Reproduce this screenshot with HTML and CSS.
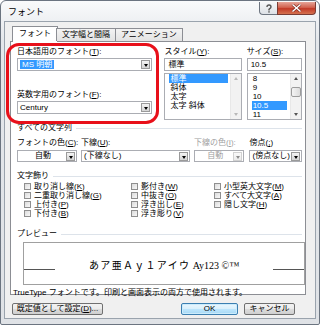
FILE: index.html
```html
<!DOCTYPE html>
<html lang="ja">
<head>
<meta charset="utf-8">
<link rel="stylesheet" href="styles.css">
</head>
<body>
<div class="window">
  <div class="titlebar">
    <span class="title">フォント</span>
    <div class="caption">
      <span class="cbtn help">
        <svg width="8" height="9" viewBox="0 0 8 9"><path d="M2 3 Q2 1 4 1 Q6 1 6 3 Q6 4 4.5 4.8 L4 5.5 L4 6.5" fill="none" stroke="#555" stroke-width="1.4"/><rect x="3.3" y="7.2" width="1.4" height="1.4" fill="#555"/></svg>
      </span>
      <span class="cbtn close">
        <svg width="11" height="8" viewBox="0 0 11 8"><path d="M1.5 0.5 L9.5 7.5 M9.5 0.5 L1.5 7.5" stroke="#7a2a22" stroke-width="2.6"/><path d="M1.5 0.5 L9.5 7.5 M9.5 0.5 L1.5 7.5" stroke="#fff" stroke-width="1.4"/></svg>
      </span>
    </div>
  </div>
  <div class="client">
    <div class="tabs">
      <span class="tab active">フォント</span>
      <span class="tab">文字幅と間隔</span>
      <span class="tab">アニメーション</span>
    </div>
    <div class="panel">
      <div class="top-row">
        <div class="col font-col">
          <div class="lbl">日本語用のフォント(<u>T</u>):</div>
          <div class="combo"><span class="ctext"><span class="sel">MS 明朝</span></span><span class="dd"></span></div>
          <div class="lbl lbl2">英数字用のフォント(<u>F</u>):</div>
          <div class="combo"><span class="ctext">Century</span><span class="dd"></span></div>
        </div>
        <div class="col style-col">
          <div class="lbl">スタイル(<u>Y</u>):</div>
          <div class="edit">標準</div>
          <div class="list">
            <div class="items">
              <div class="item on">標準</div>
              <div class="item">斜体</div>
              <div class="item">太字</div>
              <div class="item">太字 斜体</div>
            </div>
            <div class="sbar"><span class="arr up dis"></span><span class="track"></span><span class="arr down dis"></span></div>
          </div>
        </div>
        <div class="col size-col">
          <div class="lbl">サイズ(<u>S</u>):</div>
          <div class="edit">10.5</div>
          <div class="list">
            <div class="items">
              <div class="item">8</div>
              <div class="item">9</div>
              <div class="item">10</div>
              <div class="item on">10.5</div>
              <div class="item">11</div>
            </div>
            <div class="sbar"><span class="arr up"></span><span class="track"><span class="thumb"></span></span><span class="arr down"></span></div>
          </div>
        </div>
      </div>

      <div class="group-h"><span>すべての文字列</span><i></i></div>
      <div class="color-row">
        <div class="cc c1">
          <div class="lbl">フォントの色(<u>C</u>):</div>
          <div class="combo center"><span class="ctext">自動</span><span class="dd"></span></div>
        </div>
        <div class="cc c2">
          <div class="lbl">下線(<u>U</u>):</div>
          <div class="combo"><span class="ctext">(下線なし)</span><span class="dd"></span></div>
        </div>
        <div class="cc c3">
          <div class="lbl dim">下線の色(<u>I</u>):</div>
          <div class="combo center disabled"><span class="ctext">自動</span><span class="dd"></span></div>
        </div>
        <div class="cc c4">
          <div class="lbl">傍点(<u>;</u>)</div>
          <div class="combo"><span class="ctext">(傍点なし)</span><span class="dd"></span></div>
        </div>
      </div>

      <div class="group-h g2"><span>文字飾り</span><i></i></div>
      <div class="checks">
        <label class="chk"><span class="box"></span>取り消し線(<u>K</u>)</label>
        <label class="chk"><span class="box"></span>影付き(<u>W</u>)</label>
        <label class="chk"><span class="box"></span>小型英大文字(<u>M</u>)</label>
        <label class="chk"><span class="box"></span>二重取り消し線(<u>G</u>)</label>
        <label class="chk"><span class="box"></span>中抜き(<u>O</u>)</label>
        <label class="chk"><span class="box"></span>すべて大文字(<u>A</u>)</label>
        <label class="chk"><span class="box"></span>上付き(<u>P</u>)</label>
        <label class="chk"><span class="box"></span>浮き出し(<u>E</u>)</label>
        <label class="chk"><span class="box"></span>隠し文字(<u>H</u>)</label>
        <label class="chk"><span class="box"></span>下付き(<u>B</u>)</label>
        <label class="chk"><span class="box"></span>浮き彫り(<u>V</u>)</label>
      </div>

      <div class="group-h g3"><span>プレビュー</span><i></i></div>
      <div class="preview">
        <i class="pline"></i>
        <span class="ptext"><span class="pj">あア亜Ａｙ１アイウ</span> Ay123 ©™</span>
        <i class="pline"></i>
      </div>
      <div class="desc">TrueType フォントです。印刷と画面表示の両方で使用されます。</div>
    </div>
    <div class="buttons">
      <span class="btn def">既定値として設定(<u>D</u>)...</span>
      <span class="spacer"></span>
      <span class="btn ok">OK</span>
      <span class="btn cancel">キャンセル</span>
    </div>
  </div>
  <div class="highlight"></div>
</div>
</body>
</html>
```

FILE: styles.css
```css
* { box-sizing: border-box; }
html, body { margin: 0; padding: 0; background: #fff; }
body {
  font-family: "Liberation Sans", "Noto Sans CJK JP", sans-serif;
  font-size: 8px;
  line-height: 10px;
  color: #000;
}
u { text-decoration: underline; text-underline-offset: 1px; }

.window {
  position: relative;
  width: 320px;
  height: 325px;
  border: 1px solid #6b7480;
  border-radius: 6px 6px 2px 2px;
  background: linear-gradient(#f9fafb, #e4e7eb 40px, #dfe2e6);
  padding: 0 3px 5px 3px;
  display: flex;
  flex-direction: column;
}

.titlebar {
  height: 20px;
  display: flex;
  align-items: flex-start;
  justify-content: space-between;
  flex: none;
}
.title { font-size: 9px; margin: 6px 0 0 4px; line-height: 11px; color: #000; }
.caption { display: flex; margin-top: 1px; margin-right: 0px; }
.cbtn {
  height: 13px;
  display: flex; align-items: center; justify-content: center;
  border: 1px solid #6d7580;
  border-top: none;
}
.help {
  width: 18px;
  border-radius: 0 0 0 4px;
  border-right: none;
  background: linear-gradient(#f6f7f9, #dde1e6);
}
.close {
  width: 39px;
  border-radius: 0 0 4px 0;
  border-color: #7a3b33;
  background: linear-gradient(#e6a598, #d2624f 45%, #c23a27 55%, #d4714f);
}

.client {
  flex: 1;
  background: #f0f0f0;
  border: 1px solid #9aa3ad;
  padding: 4px 5px 0 5px;
  display: flex;
  flex-direction: column;
}

.tabs { display: flex; height: 15px; align-items: flex-end; padding-left: 2px; position: relative; z-index: 1; }
.tab {
  height: 13px;
  border: 1px solid #8c8e94;
  border-bottom: none;
  padding: 0 5px;
  margin-left: -1px;
  background: linear-gradient(#f3f3f3, #e3e3e3);
  line-height: 12px;
}
.tab.active {
  height: 16px;
  background: #fff;
  margin-bottom: -1px;
  padding: 1px 6px 0;
  margin-right: -1px;
  margin-left: 0;
}

.panel {
  background: #fff;
  border: 1px solid #8c8e94;
  margin-right: 4px;
  padding: 5px 3px 0 6px;
  height: 254px;
}

.top-row { display: flex; }
.col { display: flex; flex-direction: column; }
.font-col { width: 137px; margin-right: 12px; }
.style-col { width: 78px; margin-right: 5px; }
.size-col { width: 56px; }
.lbl { height: 10px; white-space: nowrap; }
.lbl.dim { color: #a0a0a0; }
.lbl2 { margin-top: 19px; }

.combo {
  height: 13px;
  border: 1px solid #abadb3;
  background: #fff;
  display: flex;
  align-items: center;
  margin-top: 1px;
  padding: 0 1px 0 1px;
}
.ctext { flex: 1; white-space: nowrap; overflow: hidden; padding-left: 1px; line-height: 10px; }
.combo.center .ctext { text-align: center; }
.combo.disabled { color: #a0a0a0; }
.combo.disabled .dd { opacity: .45; }
.sel { background: #3399ff; color: #fff; padding: 0 2px; }
.dd {
  width: 9px; height: 9px;
  border: 1px solid #9a9a9a;
  background: linear-gradient(#f4f4f4, #d4d4d4);
  position: relative;
  flex: none;
}
.dd::after {
  content: "";
  position: absolute;
  left: 2px; top: 3px;
  border-left: 2.5px solid transparent;
  border-right: 2.5px solid transparent;
  border-top: 3px solid #000;
}

.edit {
  height: 13px;
  border: 1px solid #abadb3;
  margin-top: 1px;
  padding-left: 3px;
  line-height: 11px;
}
.list {
  margin-top: 2px;
  height: 47px;
  border: 1px solid #abadb3;
  display: flex;
  overflow: hidden;
}
.items { flex: 1; padding: 0 1px 0 4px; }
.item { height: 9px; line-height: 9px; padding-left: 1px; white-space: nowrap; }
.item.on { background: #3399ff; color: #fff; }
.style-col .item.on { margin-right: 1px; }
.size-col .item.on { margin-right: 2px; }
.sbar { width: 11px; display: flex; flex-direction: column; background: #f2f2f2; border-left: 1px solid #e8e8e8; }
.arr { height: 9px; position: relative; }
.arr::after {
  content: ""; position: absolute; left: 3px; top: 3px;
  border-left: 2.5px solid transparent; border-right: 2.5px solid transparent;
}
.arr.up::after { border-bottom: 3px solid #555; }
.arr.down::after { border-top: 3px solid #555; }
.arr.dis::after { border-bottom-color: #b8b8b8; border-top-color: #b8b8b8; }
.track { flex: 1; position: relative; }
.thumb {
  position: absolute; left: 0; right: 0; top: 4px; height: 10px;
  border: 1px solid #9c9c9c; border-radius: 2px;
  background: linear-gradient(90deg, #f4f4f4, #dcdcdc);
}

.group-h { display: flex; align-items: center; margin-top: 3px; height: 10px; }
.group-h span { white-space: nowrap; color: #000; }
.group-h i { flex: 1; height: 1px; background: #dde3ea; margin-left: 4px; }
.g2 { margin-top: 9px; }
.g3 { margin-top: 11px; }

.color-row { display: flex; margin-top: 5px; }
.cc { display: flex; flex-direction: column; }
.c1 { width: 60px; margin-right: 4px; }
.c2 { width: 110px; margin-right: 4px; }
.c3 { width: 51px; margin-right: 5px; }
.c4 { width: 53px; }
.c1 .combo, .c2 .combo, .c3 .combo, .c4 .combo { margin-top: 2px; height: 12px; }

.checks {
  display: grid;
  grid-template-columns: 107px 83px 1fr;
  grid-auto-rows: 9px;
  padding-left: 7px;
  margin-top: 1px;
}
.chk { display: flex; align-items: center; white-space: nowrap; line-height: 9px; }
.box {
  width: 7px; height: 7px;
  border: 1px solid #8f8f8f;
  background: linear-gradient(135deg, #dcdcdc, #f8f8f8);
  margin-right: 3px;
  flex: none;
}

.preview {
  margin: 3px 0 0 6px;
  width: 282px;
  height: 43px;
  border: 1px solid #a0a0a0;
  display: flex;
  align-items: center;
  padding-top: 5px;
}
.pline { width: 31px; height: 1px; background: #555; flex: none; margin-top: 6px; }
.ptext {
  flex: 1; text-align: center;
  font-family: "Liberation Serif", "Noto Sans CJK JP", serif;
  font-size: 10px;
  line-height: 12px;
  white-space: nowrap;
}
.pj { letter-spacing: 1.3px; }
.desc { margin-left: -4px; margin-top: 3px; white-space: nowrap; }

.buttons { display: flex; margin-top: 8px; padding-left: 2px; padding-right: 15px; }
.spacer { flex: 1; }
.btn {
  height: 12px;
  border: 1px solid #707070;
  border-radius: 2px;
  background: linear-gradient(#f2f2f2, #ebebeb 50%, #dddddd 50%, #cfcfcf);
  display: flex; align-items: center; justify-content: center;
  line-height: 10px;
  white-space: nowrap;
}
.def { width: 91px; }
.ok { width: 57px; margin-right: 6px; border-color: #3c7fb1; background: linear-gradient(#eaf6fd, #d9f0fc 50%, #bee6fd 50%, #a7d9f5); box-shadow: inset 0 0 0 1px #ccecfc; }
.cancel { width: 51px; }

.highlight {
  position: absolute;
  left: 5px; top: 42px;
  width: 153px; height: 81px;
  border: 3px solid #e8101a;
  border-radius: 13px;
  pointer-events: none;
}
```
